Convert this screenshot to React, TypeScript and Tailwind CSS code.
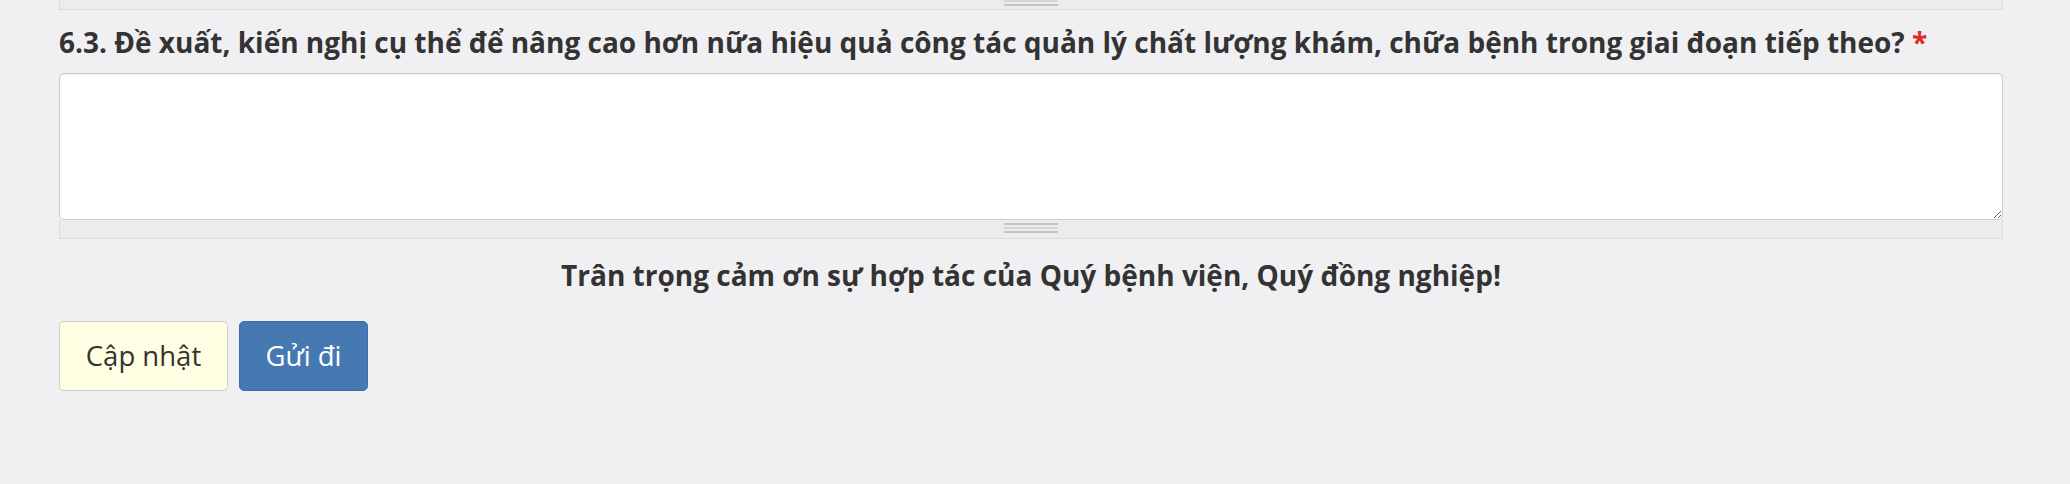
import React from "react";

function Grip() {
  return (
    <div className="flex flex-col gap-[2px] w-[54px]">
      <div className="h-[2px] bg-[#c4c4c4]" />
      <div className="h-[2px] bg-[#d6d6d6]" />
      <div className="h-[2px] bg-[#c4c4c4]" />
    </div>
  );
}

export default function App() {
  return (
    <div
      className="min-h-[484px] w-full bg-[#f0f0f2] text-[#333333]"
      style={{ fontFamily: '"Open Sans", "Noto Sans", sans-serif' }}
    >
      <div className="ml-[59px] w-[1944px]">
        {/* previous field's resize bar (bottom part) */}
        <div className="h-[10px] bg-[#ececec] border-x-[1.5px] border-b-[1.5px] border-[#dadada] flex justify-center items-end overflow-hidden">
          <div className="mb-[3px]">
            <Grip />
          </div>
        </div>

        <div className="pt-[17px] text-[28px] font-bold leading-[30px]">
          6.3. Đề xuất, kiến nghị cụ thể để nâng cao hơn nữa hiệu quả công tác quản lý chất lượng khám, chữa bệnh trong giai đoạn tiếp theo?{" "}
          <span className="text-[#e0291f]">*</span>
        </div>

        <textarea
          className="mt-[16px] block w-full h-[147px] bg-white border-[1.5px] border-[#cccccc] rounded-[5px] shadow-[inset_0_1px_2px_rgba(0,0,0,0.08)] outline-none p-2 resize"
        />

        <div className="h-[19px] bg-[#ececec] border-x-[1.5px] border-b-[1.5px] border-[#dadada] flex justify-center items-start pt-[3px]">
          <Grip />
        </div>

        <div className="mt-[18px] text-center text-[28px] font-bold leading-[36px]">
          Trân trọng cảm ơn sự hợp tác của Quý bệnh viện, Quý đồng nghiệp!
        </div>

        <div className="mt-[28px] flex gap-[11px]">
          <button className="w-[169px] h-[70px] bg-[#ffffe3] border-[1.5px] border-[#cccccc] rounded-[5px] text-[27.5px] text-[#333333] flex items-center justify-center">
            Cập nhật
          </button>
          <button className="w-[129px] h-[70px] bg-[#4678b2] border-[1.5px] border-[#3f6da5] rounded-[5px] text-[27.5px] text-white flex items-center justify-center">
            Gửi đi
          </button>
        </div>
      </div>
    </div>
  );
}
